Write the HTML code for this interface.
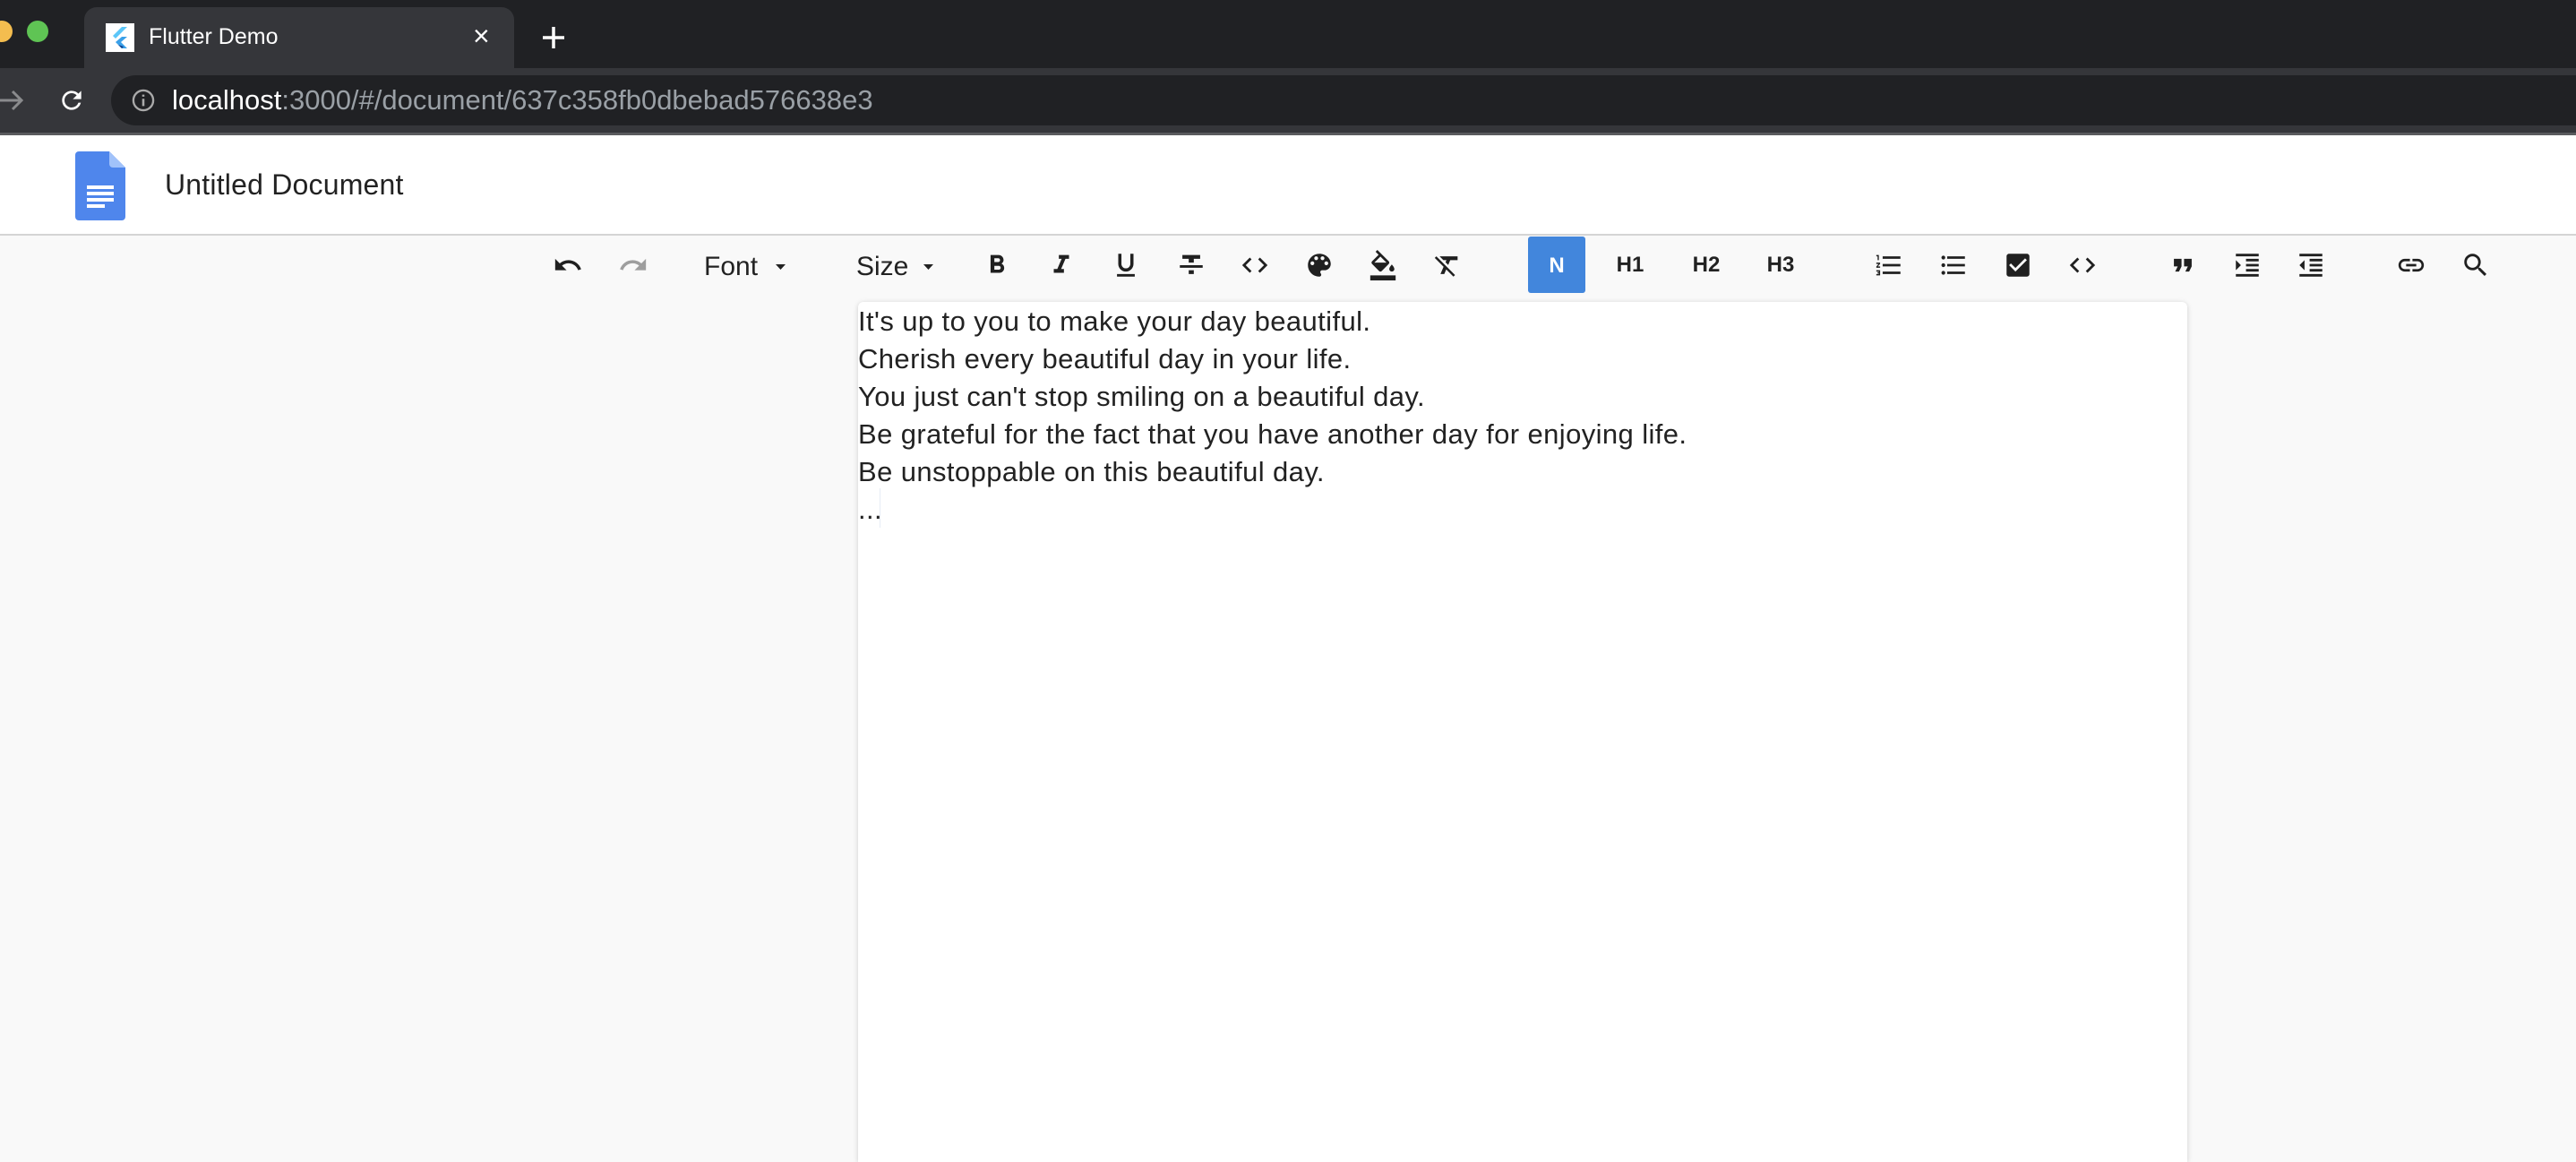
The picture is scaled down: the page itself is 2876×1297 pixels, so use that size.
<!DOCTYPE html>
<html><head><meta charset="utf-8"><style>
*{margin:0;padding:0;box-sizing:border-box}
body{width:2876px;height:1276px;overflow:hidden;background:#f9f9f9;font-family:"Liberation Sans",sans-serif;position:relative}
.a{position:absolute}
.ic{position:absolute;width:34px;height:34px;top:279px}
.ic svg{width:34px;height:34px;fill:#202020}
.t{position:absolute;font-size:31px;color:#222;letter-spacing:0.4px;white-space:nowrap;left:958px}
.h{position:absolute;top:282px;font-size:24px;color:#222;font-weight:bold;transform:translateX(-50%)}
</style></head><body>
<div class="a" style="left:0;top:0;width:2876px;height:76px;background:#202124"></div>
<div class="a" style="left:-10px;top:23px;width:24px;height:24px;border-radius:50%;background:#f4bd4f"></div>
<div class="a" style="left:30px;top:23px;width:24px;height:24px;border-radius:50%;background:#5fc454"></div>
<div class="a" style="left:94px;top:8px;width:480px;height:72px;background:#35363a;border-radius:14px 14px 0 0"></div>
<div class="a" style="left:118px;top:26px;width:32px;height:32px;background:#fff"><svg width="32" height="32" viewBox="0 0 32 32"><path d="M18 4 L8 14 L11 17 L24 4Z" fill="#5cc6f8"/><path d="M18 15 L11 21 L18 28 L24 28 L17 21 L24 15Z" fill="#3aa0e8"/><path d="M14 24 L18 28 L20 26Z" fill="#0d3c8a"/></svg></div>
<div class="a" style="left:166px;top:27px;font-size:25px;color:#fff">Flutter Demo</div>
<div class="a" style="left:528px;top:22px;font-size:32px;color:#fff">×</div>
<svg class="a" style="left:604px;top:28px" width="28" height="28"><path d="M14 2v24M2 14h24" stroke="#fff" stroke-width="3.5"/></svg>
<div class="a" style="left:0;top:76px;width:2876px;height:72px;background:#35363a"></div>
<div class="a" style="left:0;top:148px;width:2876px;height:3px;background:#5a5b5e"></div>
<svg class="a" style="left:-2px;top:98px" width="32" height="28"><path d="M2 14h24M16 4l10 10-10 10" stroke="#8a8b8d" stroke-width="3" fill="none"/></svg>
<svg class="a" style="left:64px;top:96px" width="32" height="32" viewBox="0 0 24 24"><path fill="#fff" d="M17.65 6.35A7.958 7.958 0 0012 4c-4.420 0-7.99 3.58-7.99 8s3.57 8 7.99 8c3.73 0 6.84-2.55 7.73-6h-2.08A5.99 5.99 0 0112 18c-3.31 0-6-2.69-6-6s2.69-6 6-6c1.66 0 3.14.69 4.22 1.78L13 11h7V4l-2.35 2.35z"/></svg>
<div class="a" style="left:124px;top:84px;width:2800px;height:56px;background:#202124;border-radius:28px"></div>
<svg class="a" style="left:146px;top:98px" width="28" height="28" viewBox="0 0 24 24"><circle cx="12" cy="12" r="9.5" stroke="#aaa" stroke-width="2" fill="none"/><path d="M12 10.5v7M12 6.5v2" stroke="#aaa" stroke-width="2.2"/></svg>
<div class="a" style="left:192px;top:94px;font-size:31px;color:#fff">localhost<span style="color:#9aa0a6">:3000/#/document/637c358fb0dbebad576638e3</span></div>
<div class="a" style="left:0;top:151px;width:2876px;height:112px;background:#fff;border-bottom:2px solid #d4d4d4"></div>
<svg class="a" style="left:84px;top:169px" width="56" height="77" viewBox="0 0 56 77"><path d="M4 0h34l18 18v55a4 4 0 0 1-4 4H4a4 4 0 0 1-4-4V4a4 4 0 0 1 4-4z" fill="#4f86ec"/><path d="M38 0l18 18H42a4 4 0 0 1-4-4z" fill="#a1c2fa"/><path d="M13 40h30M13 47h30M13 54h30M13 61h20" stroke="#fff" stroke-width="4"/></svg>
<div class="a" style="left:184px;top:188px;font-size:32px;color:#222;letter-spacing:0.2px">Untitled Document</div>

<div class="ic" style="left:617px"><svg viewBox="0 0 24 24"><path d="M12.5 8c-2.65 0-5.05.99-6.9 2.6L2 7v9h9l-3.62-3.62c1.39-1.16 3.16-1.88 5.120-1.88 3.54 0 6.55 2.31 7.6 5.5l2.37-.78C21.08 11.03 17.15 8 12.5 8z"/></svg></div>
<div class="ic" style="left:690px"><svg viewBox="0 0 24 24" style="fill:#9e9e9e"><path d="M18.4 10.6C16.55 8.99 14.15 8 11.5 8c-4.65 0-8.58 3.03-9.960 7.22L3.9 16c1.05-3.19 4.05-5.5 7.6-5.5 1.95 0 3.73.72 5.12 1.88L13 16h9V7l-3.6 3.6z"/></svg></div>
<div class="a" style="left:786px;top:281px;font-size:30px;color:#222">Font</div>
<svg class="a" style="left:866px;top:295px" width="11" height="6"><path d="M0 0h11L5.5 6z" fill="#222"/></svg>
<div class="a" style="left:956px;top:281px;font-size:30px;color:#222">Size</div>
<svg class="a" style="left:1031px;top:295px" width="11" height="6"><path d="M0 0h11L5.5 6z" fill="#222"/></svg>
<div class="ic" style="left:1096px"><svg viewBox="0 0 24 24"><path d="M15.6 10.79c.97-.67 1.650-1.77 1.65-2.79 0-2.26-1.75-4-4-4H7v14h7.04c2.09 0 3.71-1.7 3.71-3.79 0-1.52-.86-2.82-2.15-3.42zM10 6.5h3c.83 0 1.5.67 1.5 1.5s-.67 1.5-1.5 1.5h-3v-3zm3.5 9H10v-3h3.5c.83 0 1.5.67 1.5 1.5s-.67 1.5-1.5 1.5z"/></svg></div>
<div class="ic" style="left:1168px"><svg viewBox="0 0 24 24"><path d="M10 4v3h2.21l-3.42 8H6v3h8v-3h-2.21l3.42-8H18V4z"/></svg></div>
<div class="ic" style="left:1240px"><svg viewBox="0 0 24 24"><path d="M12 17c3.31 0 6-2.69 6-6V3h-2.5v8c0 1.93-1.57 3.5-3.5 3.5S8.5 12.93 8.5 11V3H6v8c0 3.31 2.69 6 6 6zm-7 2v2h14v-2H5z"/></svg></div>
<div class="ic" style="left:1313px"><svg viewBox="0 0 24 24"><path d="M10 19h4v-3h-4v3zM5 4v3h5v3h4V7h5V4H5zM3 14h18v-2H3v2z"/></svg></div>
<div class="ic" style="left:1384px"><svg viewBox="0 0 24 24"><path d="M9.4 16.6L4.8 12l4.6-4.6L8 6l-6 6 6 6 1.4-1.4zm5.2 0l4.6-4.6-4.6-4.6L16 6l6 6-6 6-1.4-1.4z"/></svg></div>
<div class="ic" style="left:1456px"><svg viewBox="0 0 24 24"><path d="M12 3c-4.97 0-9 4.03-9 9s4.03 9 9 9c.83 0 1.5-.67 1.5-1.5 0-.39-.15-.74-.39-1.01-.23-.26-.38-.61-.38-.99 0-.83.67-1.5 1.5-1.5H16c2.76 0 5-2.24 5-5 0-4.42-4.03-8-9-8zm-5.5 9c-.83 0-1.5-.67-1.5-1.5S5.67 9 6.5 9 8 9.67 8 10.5 7.33 12 6.5 12zm3-4C8.67 8 8 7.33 8 6.5S8.67 5 9.5 5s1.5.67 1.5 1.5S10.33 8 9.5 8zm5 0c-.83 0-1.5-.67-1.5-1.5S13.67 5 14.5 5s1.5.67 1.5 1.5S15.33 8 14.5 8zm3 4c-.83 0-1.5-.67-1.5-1.5S16.67 9 17.5 9s1.5.67 1.5 1.5-.67 1.5-1.5 1.5z"/></svg></div>
<div class="ic" style="left:1527px"><svg viewBox="0 0 24 24"><path d="M16.56 8.94L7.62 0 6.21 1.410l2.38 2.38-5.15 5.15c-.59.59-.59 1.54 0 2.12l5.5 5.5c.29.29.68.44 1.06.44s.77-.15 1.06-.44l5.5-5.5c.59-.58.59-1.53 0-2.12zM5.21 10L10 5.21 14.79 10H5.21zM19 11.5s-2 2.17-2 3.5c0 1.1.9 2 2 2s2-.9 2-2c0-1.33-2-3.5-2-3.5zM2 20h20v4H2z"/></svg></div>
<div class="ic" style="left:1599px"><svg viewBox="0 0 24 24"><path d="M3.27 5L2 6.27l6.97 6.97L6.5 19h3l1.57-3.66L16.73 21 18 19.73 3.55 5.27 3.27 5zM6 5v.18L8.82 8h2.4l-.72 1.68 2.1 2.1L14.21 8H20V5H6z"/></svg></div>
<div class="a" style="left:1706px;top:264px;width:64px;height:63px;background:#4286dc;border-radius:3px;color:#fff;font-size:24px;font-weight:bold;text-align:center;line-height:65px">N</div>
<div class="h" style="left:1820px">H1</div>
<div class="h" style="left:1905px">H2</div>
<div class="h" style="left:1988px">H3</div>
<div class="ic" style="left:2092px"><svg viewBox="0 0 24 24"><path d="M2 17h2v.5H3v1h1v.5H2v1h3v-4H2v1zm1-9h1V4H2v1h1v3zm-1 3h1.8L2 13.1v.9h3v-1H3.2L5 10.9V10H2v1zm5-6v2h14V5H7zm0 14h14v-2H7v2zm0-6h14v-2H7v2z"/></svg></div>
<div class="ic" style="left:2164px"><svg viewBox="0 0 24 24"><path d="M4 10.5c-.83 0-1.5.67-1.5 1.5s.67 1.5 1.5 1.5 1.5-.67 1.5-1.5-.67-1.5-1.5-1.5zm0-6c-.83 0-1.5.67-1.5 1.5S3.17 7.5 4 7.5 5.5 6.83 5.5 6 4.83 4.5 4 4.5zm0 12c-.83 0-1.5.68-1.5 1.5s.68 1.5 1.5 1.5 1.5-.68 1.5-1.5-.67-1.5-1.5-1.5zM7 19h14v-2H7v2zm0-6h14v-2H7v2zm0-8v2h14V5H7z"/></svg></div>
<div class="ic" style="left:2236px"><svg viewBox="0 0 24 24"><path d="M19 3H5c-1.11 0-2 .9-2 2v14c0 1.1.89 2 2 2h14c1.11 0 2-.9 2-2V5c0-1.1-.89-2-2-2zm-9 14l-5-5 1.41-1.41L10 14.17l7.59-7.59L19 8l-9 9z"/></svg></div>
<div class="ic" style="left:2308px"><svg viewBox="0 0 24 24"><path d="M9.4 16.6L4.8 12l4.6-4.6L8 6l-6 6 6 6 1.4-1.4zm5.2 0l4.6-4.6-4.6-4.6L16 6l6 6-6 6-1.4-1.4z"/></svg></div>
<div class="ic" style="left:2420px"><svg viewBox="0 0 24 24"><path d="M6 17h3l2-4V7H5v6h3zm8 0h3l2-4V7h-6v6h3z"/></svg></div>
<div class="ic" style="left:2492px"><svg viewBox="0 0 24 24"><path d="M3 21h18v-2H3v2zM3 8v8l4-4-4-4zm8 9h10v-2H11v2zM3 3v2h18V3H3zm8 6h10V7H11v2zm0 4h10v-2H11v2z"/></svg></div>
<div class="ic" style="left:2563px"><svg viewBox="0 0 24 24"><path d="M11 17h10v-2H11v2zm-8-5l4 4V8l-4 4zm0 9h18v-2H3v2zM3 3v2h18V3H3zm8 6h10V7H11v2zm0 4h10v-2H11v2z"/></svg></div>
<div class="ic" style="left:2675px"><svg viewBox="0 0 24 24"><path d="M3.9 12c0-1.71 1.39-3.1 3.1-3.1h4V7H7c-2.76 0-5 2.24-5 5s2.24 5 5 5h4v-1.9H7c-1.71 0-3.1-1.39-3.1-3.1zM8 13h8v-2H8v2zm9-6h-4v1.9h4c1.71 0 3.1 1.39 3.1 3.1s-1.39 3.1-3.1 3.1h-4V17h4c2.76 0 5-2.24 5-5s-2.24-5-5-5z"/></svg></div>
<div class="ic" style="left:2747px"><svg viewBox="0 0 24 24"><path d="M15.5 14h-.79l-.28-.27C15.41 12.59 16 11.11 16 9.5 16 5.91 13.09 3 9.5 3S3 5.91 3 9.5 5.91 16 9.5 16c1.61 0 3.09-.59 4.23-1.57l.27.28v.79l5 4.99L20.49 19l-4.99-5zm-6 0C7.01 14 5 11.99 5 9.5S7.01 5 9.5 5 14 7.01 14 9.5 11.99 14 9.5 14z"/></svg></div>

<div class="a" style="left:958px;top:337px;width:1484px;height:960px;background:#fff;border-radius:6px 6px 0 0;box-shadow:0 1px 6px rgba(0,0,0,0.18)"></div>
<div class="t" style="top:341px">It's up to you to make your day beautiful.</div>
<div class="t" style="top:383px">Cherish every beautiful day in your life.</div>
<div class="t" style="top:425px">You just can't stop smiling on a beautiful day.</div>
<div class="t" style="top:467px">Be grateful for the fact that you have another day for enjoying life.</div>
<div class="t" style="top:509px">Be unstoppable on this beautiful day.</div>
<div class="t" style="top:551px">...</div>
<div class="a" style="left:982px;top:545px;width:1px;height:44px;background:#e6ecf5"></div>
</body></html>
